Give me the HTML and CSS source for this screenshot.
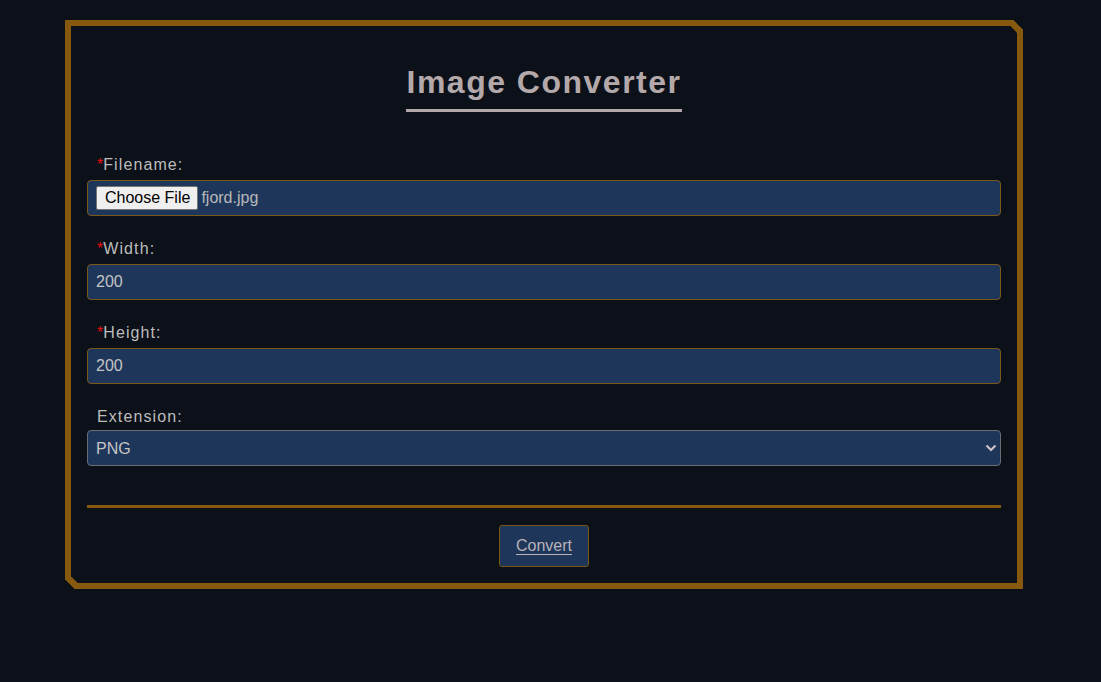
FILE: index.html
```html
<!DOCTYPE html>
<html lang="en">
<head>
<meta charset="utf-8">
<title>Image Converter</title>
<link rel="stylesheet" href="styles.css">
</head>
<body>
<main class="card">
  <header class="head">
    <h1 class="title">Image Converter</h1>
  </header>
  <form class="form">
    <div class="group">
      <label class="label"><span class="req">*</span>Filename:</label>
      <div class="field file">
        <span class="file-btn">Choose File</span>
        <span class="file-name">fjord.jpg</span>
      </div>
    </div>
    <div class="group">
      <label class="label"><span class="req">*</span>Width:</label>
      <input class="field" type="text" value="200">
    </div>
    <div class="group">
      <label class="label"><span class="req">*</span>Height:</label>
      <input class="field" type="text" value="200">
    </div>
    <div class="group group-last">
      <label class="label">Extension:</label>
      <div class="select-wrap">
        <select class="field select">
          <option>PNG</option>
          <option>JPG</option>
          <option>WEBP</option>
        </select>
        <svg class="chev" width="12" height="8" viewBox="0 0 12 8"><path d="M1.5 1.5 L6 6 L10.5 1.5" fill="none" stroke="#c9c1c9" stroke-width="2.2"/></svg>
      </div>
    </div>
    <div class="divider"></div>
    <div class="actions">
      <button type="button" class="btn">Convert</button>
    </div>
  </form>
</main>
</body>
</html>
```
FILE: styles.css
```css
html, body {
  margin: 0;
  padding: 0;
  background: #0b1019;
}
body {
  font-family: "Liberation Sans", Arial, sans-serif;
  height: 682px;
  overflow: hidden;
}
.card {
  box-sizing: border-box;
  width: 958px;
  margin: 20px 0 0 65px;
  border: 6px solid #86590f;
  border-radius: 1px 10px 1px 10px;
  corner-shape: bevel;
  padding: 38px 16px 16px;
}
.head {
  text-align: center;
}
.title {
  display: inline-block;
  margin: 0;
  font-size: 32px;
  line-height: 37px;
  font-weight: bold;
  letter-spacing: 1.5px;
  color: #b4a9aa;
  padding-bottom: 8px;
  border-bottom: 3px solid #b4a9aa;
}
.form {
  display: flex;
  flex-direction: column;
  margin-top: 44px;
}
.group {
  display: flex;
  flex-direction: column;
  gap: 6px;
  margin-bottom: 24px;
}
.group-last {
  gap: 4px;
  margin-bottom: 0;
}
.label {
  font-size: 16px;
  line-height: 18px;
  letter-spacing: 1.1px;
  color: #bdbdbd;
  padding-left: 10px;
}
.req {
  color: #e01010;
  letter-spacing: 0;
}
.field {
  box-sizing: border-box;
  width: 100%;
  height: 36px;
  margin: 0;
  background: #1f365b;
  border: 1px solid #7a5716;
  border-radius: 4px;
  padding: 0 8px;
  font-family: "Liberation Sans", Arial, sans-serif;
  font-size: 16px;
  color: #c4c4c4;
  outline: none;
}
.file {
  display: flex;
  align-items: center;
  gap: 3px;
}
.file-btn {
  box-sizing: border-box;
  height: 24px;
  display: flex;
  align-items: center;
  padding: 0 7px 0 8px;
  background: #efefef;
  border: 1px solid #767676;
  border-radius: 2px;
  color: #000;
  font-size: 16px;
}
.file-name {
  color: #b9b9b9;
}
.select-wrap {
  position: relative;
}
.select {
  appearance: none;
  -webkit-appearance: none;
  border-color: #6c6c72;
  display: block;
}
.chev {
  position: absolute;
  right: 4px;
  top: 14px;
  pointer-events: none;
}
.divider {
  height: 3px;
  background: #86590f;
  margin-top: 39px;
}
.actions {
  display: flex;
  justify-content: center;
  margin-top: 17px;
}
.btn {
  box-sizing: border-box;
  height: 42px;
  padding: 0 16px;
  background: #1f365b;
  border: 1px solid #7a5716;
  border-radius: 3px;
  font-family: "Liberation Sans", Arial, sans-serif;
  font-size: 16px;
  line-height: 18px;
  color: #b9b3b9;
  text-decoration: underline;
  text-underline-offset: 3px;
  cursor: pointer;
}
```
